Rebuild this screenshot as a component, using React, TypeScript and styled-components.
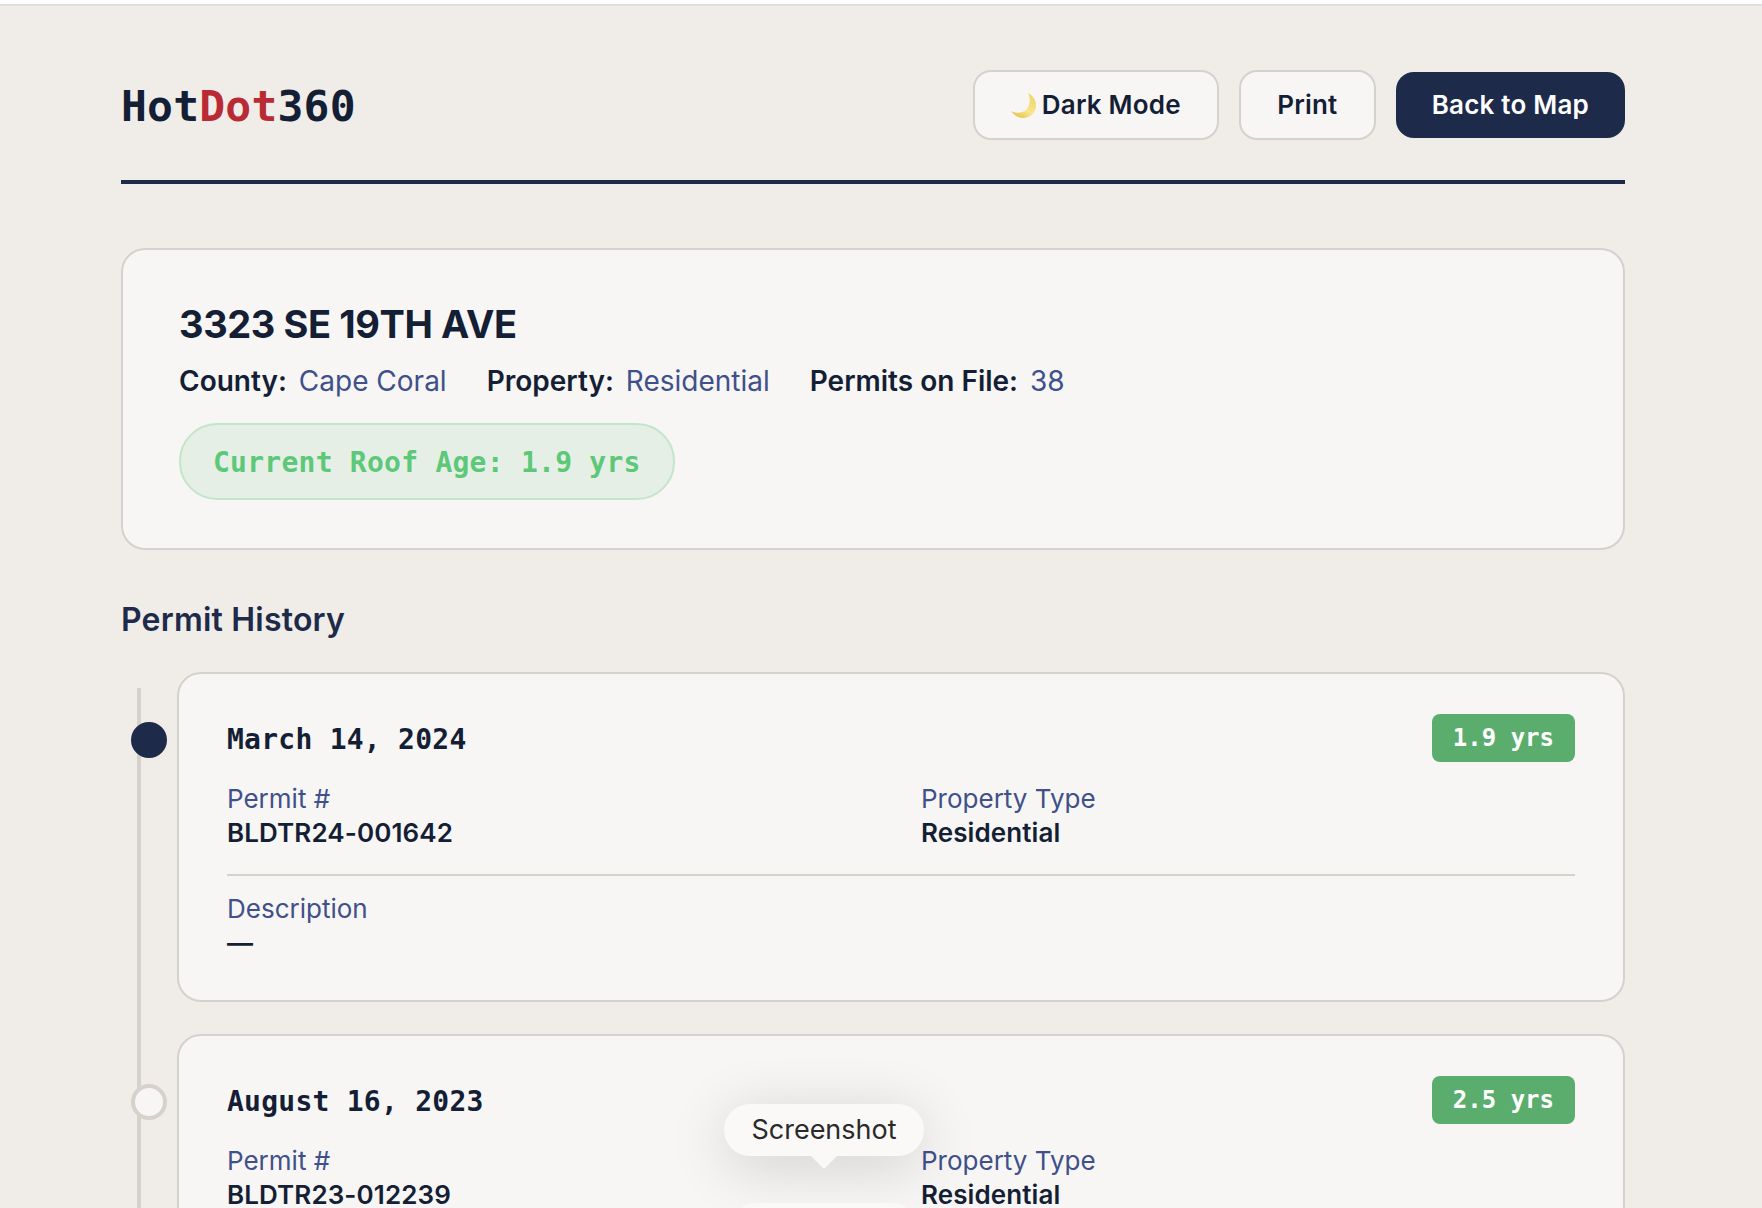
import React from 'react';
import styled, { createGlobalStyle } from 'styled-components';

const GlobalStyle = createGlobalStyle`
  html, body {
    margin: 0;
    padding: 0;
    height: 100%;
    overflow: hidden;
    background: #f0ede8;
  }
  * {
    box-sizing: border-box;
  }
`;

const sans = `Inter, 'Noto Sans', sans-serif`;
const mono = `'DejaVu Sans Mono', 'Liberation Mono', monospace`;

const Page = styled.div`
  position: relative;
  height: 1208px;
  overflow: hidden;
  background: #f0ede8;
  border-top: 4px solid #ffffff;
  font-family: ${sans};
  color: #141e35;
`;

const TopRule = styled.div`
  height: 2px;
  background: #e0dfdc;
`;

const Container = styled.main`
  padding: 64px 137px 0 121px;
`;

const Header = styled.header`
  display: flex;
  justify-content: space-between;
  align-items: center;
  height: 70px;
  padding-bottom: 40px;
  border-bottom: 4px solid #1e2a4a;
  margin-bottom: 64px;
  box-sizing: content-box;
`;

const Logo = styled.h1`
  margin: 2px 0 0;
  font-family: ${mono};
  font-size: 43px;
  font-weight: 700;
  line-height: 50px;
  letter-spacing: 0.2px;
  color: #141e35;

  span {
    color: #b92a35;
  }
`;

const Actions = styled.div`
  display: flex;
  align-items: center;
  gap: 20px;
`;

const Button = styled.button<{ $primary?: boolean }>`
  display: flex;
  align-items: center;
  justify-content: center;
  gap: 6px;
  padding: 16px 36px;
  font-family: ${sans};
  font-size: 26px;
  font-weight: 600;
  line-height: 34px;
  letter-spacing: 0.2px;
  border-radius: 18px;
  border: ${props => (props.$primary ? 'none' : '2px solid #d6d1ca')};
  background: ${props => (props.$primary ? '#1e2a4a' : '#f7f6f4')};
  color: ${props => (props.$primary ? '#ffffff' : '#141e35')};
`;

const PrintButton = styled(Button)`
  min-width: 137px;
`;

const Card = styled.section`
  background: #f7f6f4;
  border: 2px solid #d6d1ca;
  border-radius: 24px;
`;

const HeroCard = styled(Card)`
  padding: 49px 56px 48px;
`;

const Address = styled.h2`
  margin: 0;
  font-size: 38px;
  font-weight: 700;
  line-height: 50px;
  letter-spacing: -0.4px;
  color: #141e35;
`;

const MetaRow = styled.div`
  display: flex;
  gap: 40px;
  margin-top: 14px;
  font-size: 28px;
  line-height: 36px;
`;

const MetaItem = styled.div`
  display: flex;
  gap: 12px;

  b {
    font-weight: 600;
    color: #141e35;
  }

  span {
    color: #40508a;
  }
`;

const AgePill = styled.div`
  width: fit-content;
  margin-top: 24px;
  padding: 19px 32px 17px;
  border: 2px solid #c3e5c9;
  border-radius: 38px;
  background: #e6efe6;
  font-family: ${mono};
  font-size: 28px;
  font-weight: 700;
  line-height: 37px;
  letter-spacing: 0.25px;
  color: #5cc878;
`;

const SectionTitle = styled.h3`
  margin: 49px 0 31px;
  font-size: 32px;
  font-weight: 600;
  line-height: 42px;
  letter-spacing: 0.2px;
  color: #1e2a4a;
`;

const Timeline = styled.div`
  position: relative;
  display: flex;
  flex-direction: column;
  gap: 32px;
  padding-left: 56px;

  &::before {
    content: '';
    position: absolute;
    left: 16px;
    top: 16px;
    bottom: 0;
    width: 4px;
    background: #d6d1ca;
  }
`;

const EntryCard = styled(Card)`
  position: relative;
  padding: 40px 48px;
`;

const Dot = styled.span<{ $active?: boolean }>`
  position: absolute;
  left: -48px;
  top: 48px;
  width: 36px;
  height: 36px;
  border-radius: 50%;
  background: ${props => (props.$active ? '#1e2a4a' : '#f7f6f4')};
  border: 4px solid ${props => (props.$active ? '#1e2a4a' : '#d6d1ca')};
`;

const EntryHead = styled.div`
  display: flex;
  justify-content: space-between;
  align-items: center;
  height: 48px;
  margin-bottom: 20px;
`;

const EntryDate = styled.div`
  margin-top: 2px;
  font-family: ${mono};
  font-size: 28px;
  font-weight: 700;
  letter-spacing: 0.25px;
  color: #141e35;
`;

const AgeBadge = styled.div`
  padding: 1px 21px 0;
  height: 48px;
  border-radius: 8px;
  background: #5aad6d;
  color: #ffffff;
  font-family: ${mono};
  font-size: 24px;
  font-weight: 700;
  line-height: 47px;
`;

const FieldGrid = styled.div`
  display: grid;
  grid-template-columns: 1fr 1fr;
  column-gap: 40px;
  padding-bottom: 24px;
  border-bottom: 2px solid #d6d1ca;
`;

const Field = styled.div<{ $spaced?: boolean }>`
  margin-top: ${props => (props.$spaced ? '16px' : '0')};
`;

const FieldLabel = styled.div`
  font-size: 26px;
  line-height: 34px;
  color: #40508a;
`;

const FieldValue = styled.div`
  font-size: 26px;
  font-weight: 600;
  line-height: 34px;
  letter-spacing: 0.1px;
  color: #141e35;
`;

const Tooltip = styled.div`
  position: absolute;
  left: 724px;
  top: 1100px;
  width: 200px;
  height: 52px;
  border-radius: 26px;
  background: #faf9f7;
  box-shadow: 0 10px 60px rgba(0, 0, 0, 0.16);
  font-size: 27px;
  line-height: 52px;
  text-align: center;
  color: #2a2a2a;

  &::after {
    content: '';
    position: absolute;
    left: 90px;
    bottom: -9px;
    width: 20px;
    height: 20px;
    border-radius: 3px;
    background: #faf9f7;
    transform: rotate(45deg);
  }
`;

const DockButton = styled.div`
  position: absolute;
  left: 730px;
  top: 1199px;
  width: 188px;
  height: 52px;
  border-radius: 26px;
  background: #faf9f7;
`;

const MoonIcon = () => (
  <svg width="25" height="25" viewBox="0 0 25 25">
    <defs>
      <linearGradient id="moon" x1="0.9" y1="0.1" x2="0.3" y2="1">
        <stop offset="0" stopColor="#f0d468" />
        <stop offset="0.6" stopColor="#f8e68c" />
        <stop offset="1" stopColor="#e8c44e" />
      </linearGradient>
    </defs>
    <path
      d="M17 0C23 3 25.5 9 25 13C24.5 20 19 25 12 25C7 25 3 22 0 18C5 20.5 11 20.5 15 17C19 13 20 6 17 0Z"
      fill="url(#moon)"
    />
  </svg>
);

const permits = [
  { date: 'March 14, 2024', age: '1.9 yrs', number: 'BLDTR24-001642', active: true },
  { date: 'August 16, 2023', age: '2.5 yrs', number: 'BLDTR23-012239', active: false },
];

const App: React.FC = () => (
  <Page>
    <GlobalStyle />
    <TopRule />
    <Container>
      <Header>
        <Logo>
          Hot<span>Dot</span>360
        </Logo>
        <Actions>
          <Button>
            <MoonIcon />
            Dark Mode
          </Button>
          <PrintButton>Print</PrintButton>
          <Button $primary>Back to Map</Button>
        </Actions>
      </Header>

      <HeroCard>
        <Address>3323 SE 19TH AVE</Address>
        <MetaRow>
          <MetaItem>
            <b>County:</b>
            <span>Cape Coral</span>
          </MetaItem>
          <MetaItem>
            <b>Property:</b>
            <span>Residential</span>
          </MetaItem>
          <MetaItem>
            <b>Permits on File:</b>
            <span>38</span>
          </MetaItem>
        </MetaRow>
        <AgePill>Current Roof Age: 1.9 yrs</AgePill>
      </HeroCard>

      <SectionTitle>Permit History</SectionTitle>
      <Timeline>
        {permits.map(permit => (
          <EntryCard key={permit.number}>
            <Dot $active={permit.active} />
            <EntryHead>
              <EntryDate>{permit.date}</EntryDate>
              <AgeBadge>{permit.age}</AgeBadge>
            </EntryHead>
            <FieldGrid>
              <Field>
                <FieldLabel>Permit #</FieldLabel>
                <FieldValue>{permit.number}</FieldValue>
              </Field>
              <Field>
                <FieldLabel>Property Type</FieldLabel>
                <FieldValue>Residential</FieldValue>
              </Field>
            </FieldGrid>
            <Field $spaced>
              <FieldLabel>Description</FieldLabel>
              <FieldValue>—</FieldValue>
            </Field>
          </EntryCard>
        ))}
      </Timeline>
    </Container>
    <Tooltip>Screenshot</Tooltip>
    <DockButton />
  </Page>
);

export default App;
